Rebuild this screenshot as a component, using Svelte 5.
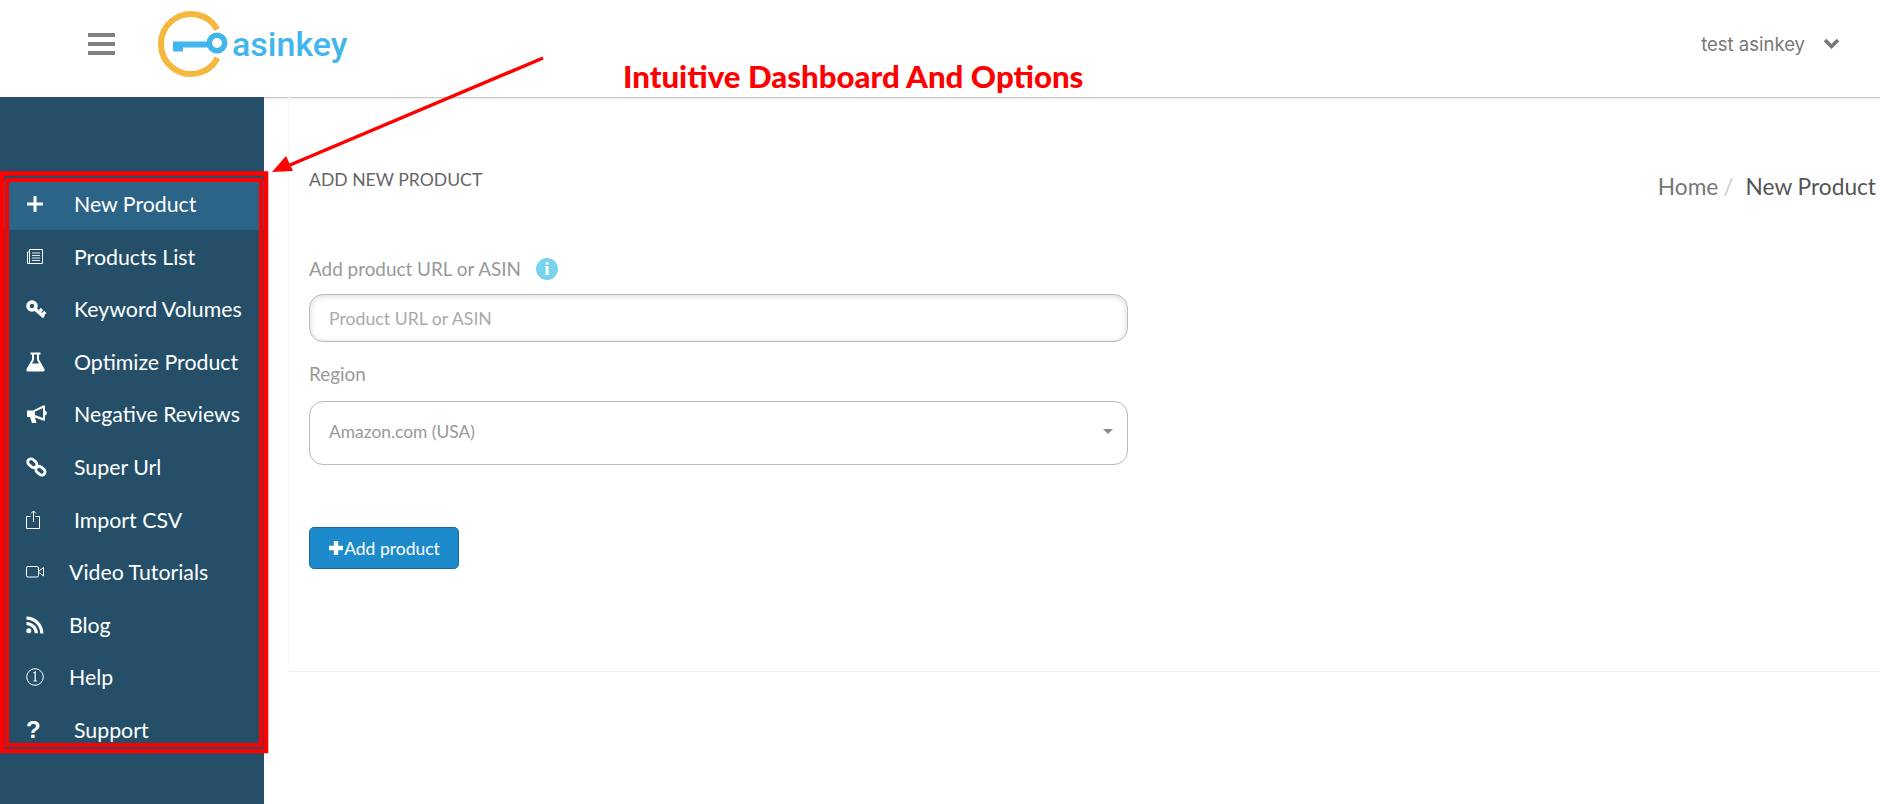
<script>
  const navItems = [
    { label: 'New Product', icon: 'plus', active: true },
    { label: 'Products List', icon: 'list' },
    { label: 'Keyword Volumes', icon: 'key' },
    { label: 'Optimize Product', icon: 'flask' },
    { label: 'Negative Reviews', icon: 'bullhorn' },
    { label: 'Super Url', icon: 'link' },
    { label: 'Import CSV', icon: 'upload' },
    { label: 'Video Tutorials', icon: 'video', narrow: true },
    { label: 'Blog', icon: 'rss', narrow: true },
    { label: 'Help', icon: 'info', narrow: true },
    { label: 'Support', icon: 'question' },
  ]
</script>

<div class="page">
  <header class="topbar">
    <button class="burger" aria-label="menu"><span></span><span></span><span></span></button>
    <div class="logo">
      <svg width="82" height="70" viewBox="0 0 82 70">
        <path d="M62.200 20.500 A30 30 0 1 0 62.500 49" fill="none" stroke="#f4b83f" stroke-width="6" />
        <path d="M18 32.500h36v6H28v4h-10z" fill="#41b6ec" />
        <circle cx="62" cy="34" r="7.700" fill="#fff" stroke="#41b6ec" stroke-width="5.500" />
      </svg>
      <span class="logo-text">asinkey</span>
    </div>
    <div class="user">
      <span>test asinkey</span>
      <svg width="17" height="11" viewBox="0 0 17 11"><path d="M2 2l6.500 6.500L15 2" fill="none" stroke="#777" stroke-width="3.600" /></svg>
    </div>
  </header>

  <div class="body">
    <aside class="sidebar">
      <ul>
        {#each navItems as item}
          <li class:active={item.active} class:narrow={item.narrow}>
            <span class="icon">
              {#if item.icon === 'plus'}
                <svg width="18" height="18" viewBox="0 0 18 18"><path d="M7.500 1h3v6.500H17v3h-6.500V17h-3v-6.500H1v-3h6.500z" fill="#fff" /></svg>
              {:else if item.icon === 'list'}
                <svg width="18" height="18" viewBox="0 0 18 18" fill="none" stroke="#fff" stroke-width="1"><path d="M3.500 1.500h13v14h-13zM3.500 4H1.500v11.500h2" /><path d="M6 5h8M6 7.500h8M6 10h8M6 12.500h8" stroke="#dfe6ea" /></svg>
              {:else if item.icon === 'key'}
                <svg width="21" height="19" viewBox="0 0 21 19"><circle cx="6" cy="6" r="4" fill="none" stroke="#fff" stroke-width="3.600" /><path d="M9.500 9.500l8.500 7.500M14 11l2-2M17 14l2.500-2" fill="none" stroke="#fff" stroke-width="3.200" /></svg>
              {:else if item.icon === 'flask'}
                <svg width="19" height="20" viewBox="0 0 19 20"><path d="M4.500 0.500h10v2h-1.500v5l5.500 9.500q0.500 2.500-1.500 2.500H2q-2 0-1.500-2.500L6 7.500v-5H4.500z" fill="#fff" /><path d="M8 2.500v5.500L6 11.500h7L11 8V2.500z" fill="#254f68" /></svg>
              {:else if item.icon === 'bullhorn'}
                <svg width="22" height="19" viewBox="0 0 22 19"><path d="M1 5.500h6L17 0.500h2v5q2 1 2 2.500t-2 2.500v5h-2L9 12.500 10.500 18H6L4 12H1z" fill="#fff" /><path d="M9 6.500L17 3v10L9 10z" fill="#254f68" /></svg>
              {:else if item.icon === 'link'}
                <svg width="21" height="20" viewBox="0 0 21 20" fill="none" stroke="#fff" stroke-width="2.800"><rect x="1.500" y="3" width="10" height="6.500" rx="3.200" transform="rotate(40 6.500 6)" /><rect x="9.500" y="10.500" width="10" height="6.500" rx="3.200" transform="rotate(40 14.500 13.700)" /></svg>
              {:else if item.icon === 'upload'}
                <svg width="15" height="19" viewBox="0 0 15 19" fill="none" stroke="#fff" stroke-width="1"><path d="M4.500 6.500h-4v12h13v-12h-4" /><path d="M7.500 12V1M5 3.500L7.500 1 10 3.500" /></svg>
              {:else if item.icon === 'video'}
                <svg width="19" height="12" viewBox="0 0 19 12" fill="none" stroke="#fff" stroke-width="1"><rect x="0.500" y="0.500" width="12" height="10.500" rx="1.500" /><path d="M13 5l4.500-3.500v8.500L13 6.500" /></svg>
              {:else if item.icon === 'rss'}
                <svg width="18" height="18" viewBox="0 0 18 18"><circle cx="2.800" cy="14.700" r="2.500" fill="#fff" /><path d="M0.500 7.500a10 10 0 0 1 9.800 9.800M0.500 2.200a15.500 15.500 0 0 1 15.300 15.300" fill="none" stroke="#fff" stroke-width="3.200" /></svg>
              {:else if item.icon === 'info'}
                <svg width="18" height="18" viewBox="0 0 18 18"><circle cx="9" cy="9" r="8.300" fill="none" stroke="#fff" stroke-width="1" /><path d="M7.500 5L9.200 4v9M7.500 13h3.400" fill="none" stroke="#fff" stroke-width="1.200" /></svg>
              {:else}
                <span class="question">?</span>
              {/if}
            </span>
            <span class="label">{item.label}</span>
          </li>
        {/each}
      </ul>
    </aside>

    <main class="content">
      <section class="card">
        <div class="title-row">
          <h1>ADD NEW PRODUCT</h1>
          <div class="crumbs"><span>Home</span><i>/</i><b>New Product</b></div>
        </div>

        <form class="form">
          <div class="label-row">
            <span class="field-label">Add product URL or ASIN</span>
            <span class="info-badge">i</span>
          </div>
          <div class="input">Product URL or ASIN</div>
          <div class="field-label region">Region</div>
          <div class="select">
            <span>Amazon.com (USA)</span>
            <span class="caret"></span>
          </div>
          <button type="button" class="add">
            <svg width="16" height="16" viewBox="0 0 16 16"><path d="M5.800 1h4.400v4.800H15v4.400h-4.800V15H5.800v-4.800H1V5.800h4.800z" fill="#fff" /></svg>Add product
          </button>
        </form>
      </section>
    </main>
  </div>

  <!-- annotation drawn over the screenshot -->
  <div class="note">Intuitive Dashboard And Options</div>
  <svg class="marks" width="1880" height="804" viewBox="0 0 1880 804">
    <path d="M543 58L290 165" stroke="#f00" stroke-width="3.500" fill="none" />
    <path d="M272 172L286 156 293 171z" fill="#f00" />
    <rect x="2" y="173.500" width="264" height="577.500" fill="none" stroke="#f00" stroke-width="4.500" />
    <rect x="7" y="180" width="254" height="565" fill="none" stroke="#f00" stroke-width="4" />
  </svg>
</div>

<style>
  :global(body) {
    margin: 0;
    background: #fff;
    font-family: 'Lato', 'Liberation Sans', sans-serif;
  }

  .page {
    position: relative;
    width: 1880px;
    height: 804px;
    overflow: hidden;
    display: flex;
    flex-direction: column;
  }

  .topbar {
    height: 98px;
    flex: none;
    display: flex;
    align-items: center;
    padding-left: 88px;
    padding-right: 40px;
    box-sizing: border-box;
    border-bottom: 1px solid #c8c8c8;
    box-shadow: 0 1px 1px rgba(0, 0, 0, 0.06);
  }

  .burger {
    width: 27px;
    height: 22px;
    padding: 0;
    border: 0;
    background: none;
    display: flex;
    flex-direction: column;
    justify-content: space-between;
    margin-top: -10px;
  }

  .burger span {
    display: block;
    height: 4px;
    background: #808080;
  }

  .logo {
    display: flex;
    align-items: center;
    margin-left: 40px;
    margin-top: -10px;
  }

  .logo-text {
    font-family: 'Roboto', sans-serif;
    font-weight: 500;
    font-size: 34px;
    color: #41b6ec;
    margin-left: -5px;
  }

  .user {
    margin-left: auto;
    display: flex;
    align-items: center;
    gap: 18px;
    font-family: 'Inter', sans-serif;
    font-size: 18.500px;
    color: #777;
    margin-top: -10px;
  }

  .body {
    flex: 1;
    display: flex;
    min-height: 0;
    margin-top: -1px;
    position: relative;
  }

  .sidebar {
    width: 264px;
    flex: none;
    background: #254f68;
    padding-top: 84px;
    box-sizing: border-box;
  }

  .sidebar ul {
    list-style: none;
    margin: 0;
    padding: 0;
  }

  .sidebar li {
    height: 49px;
    margin-bottom: 3.6px;
    padding-bottom: 3px;
    box-sizing: border-box;
    display: flex;
    align-items: center;
    color: #fff;
    font-size: 21.300px;
  }

  .sidebar li.active {
    background: #2c6488;
  }

  .icon {
    width: 48px;
    margin-left: 26px;
    display: flex;
    align-items: center;
    flex: none;
  }

  li.narrow .icon {
    width: 43px;
  }

  .question {
    font-family: 'Liberation Sans', sans-serif;
    font-weight: 700;
    font-size: 24px;
    line-height: 1;
  }

  .content {
    flex: 1;
    min-width: 0;
    padding-left: 24px;
  }

  .card {
    height: 575px;
    box-sizing: border-box;
    padding: 0 4px 0 20px;
    border-left: 1px solid #f8f8f8;
    border-bottom: 1px solid #f0f0f0;
  }

  .title-row {
    display: flex;
    justify-content: space-between;
    align-items: flex-start;
    padding-top: 73px;
  }

  h1 {
    margin: 0;
    font-size: 17.600px;
    font-weight: 400;
    line-height: 20px;
    color: #666;
  }

  .crumbs {
    font-size: 22.700px;
    line-height: 28px;
    margin-top: 3px;
    color: #777;
    display: flex;
  }

  .crumbs i {
    font-style: normal;
    color: #ccc;
    margin: 0 12px 0 5px;
  }

  .crumbs b {
    font-weight: 400;
    color: #555;
  }

  .form {
    width: 819px;
    margin-top: 56px;
    display: flex;
    flex-direction: column;
    align-items: flex-start;
  }

  .label-row {
    display: flex;
    align-items: center;
    gap: 15px;
    height: 24px;
  }

  .field-label {
    font-size: 18.900px;
    line-height: 24px;
    color: #999;
  }

  .info-badge {
    width: 22px;
    height: 22px;
    border-radius: 50%;
    background: #7ad3ec;
    color: #fff;
    font-family: 'Liberation Serif', serif;
    font-weight: 700;
    font-size: 19px;
    line-height: 22px;
    text-align: center;
  }

  .input,
  .select {
    width: 100%;
    box-sizing: border-box;
    display: flex;
    align-items: center;
    padding-left: 19px;
    font-size: 17.700px;
    border: 1px solid #bdb9b5;
    border-radius: 14px;
  }

  .input {
    height: 48px;
    margin-top: 13px;
    color: #aaa;
    box-shadow: inset 0 1px 6px rgba(0, 0, 0, 0.16);
  }

  .region {
    margin-top: 20px;
  }

  .select {
    height: 64px;
    margin-top: 15px;
    color: #999;
    font-size: 17.400px;
    justify-content: space-between;
    padding-right: 14px;
    padding-bottom: 3px;
  }

  .caret {
    width: 0;
    height: 0;
    border-left: 5px solid transparent;
    border-right: 5px solid transparent;
    border-top: 5px solid #888;
  }

  .add {
    margin-top: 62px;
    width: 150px;
    height: 42px;
    padding: 0;
    display: flex;
    align-items: center;
    justify-content: center;
    background: #1c8acb;
    border: 1px solid #1b6a9b;
    border-radius: 5px;
    color: #fff;
    font-family: inherit;
    font-size: 17.500px;
  }

  .note {
    position: absolute;
    left: 623px;
    top: 56px;
    font-family: 'Lato', sans-serif;
    font-weight: 900;
    font-size: 31.200px;
    line-height: 40px;
    color: #f00;
    white-space: nowrap;
  }

  .marks {
    position: absolute;
    left: 0;
    top: 0;
    pointer-events: none;
  }
</style>
